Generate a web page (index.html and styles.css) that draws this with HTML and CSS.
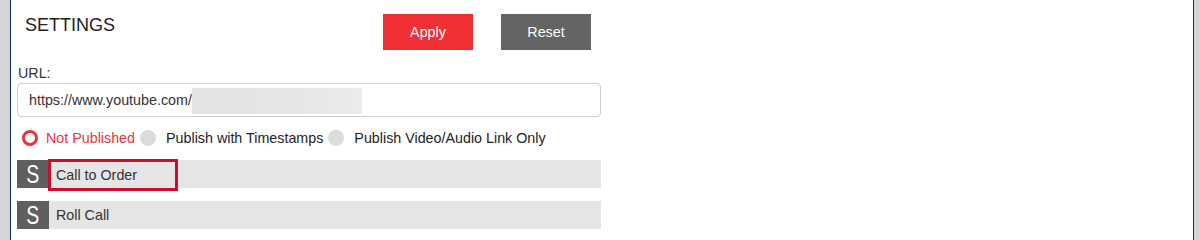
FILE: index.html
```html
<!DOCTYPE html>
<html>
<head>
<meta charset="utf-8">
<link rel="stylesheet" href="styles.css">
</head>
<body>
<div class="frame">
  <div class="header">
    <div class="title">SETTINGS</div>
    <button class="btn btn-apply">Apply</button>
    <button class="btn btn-reset">Reset</button>
  </div>
  <div class="label">URL:</div>
  <div class="input"><span class="url-text">https://www.youtube.com/</span><span class="redact"></span></div>
  <div class="radios">
    <span class="radio radio-on"></span><span class="radio-label label-on">Not Published</span>
    <span class="radio"></span><span class="radio-label">Publish with Timestamps</span>
    <span class="radio"></span><span class="radio-label">Publish Video/Audio Link Only</span>
  </div>
  <div class="row row-first">
    <div class="s-box"><span class="s-glyph">S</span></div>
    <div class="row-title row-title-focus">Call to Order</div>
  </div>
  <div class="row">
    <div class="s-box"><span class="s-glyph">S</span></div>
    <div class="row-title">Roll Call</div>
  </div>
</div>
</body>
</html>
```

FILE: styles.css
```css
html, body {
  margin: 0;
  padding: 0;
  height: 100%;
}
body {
  background: #d5d5d5;
  font-family: "Liberation Sans", Arial, sans-serif;
  color: #222;
  overflow: hidden;
}
.frame {
  margin: 0 6px 0 10px;
  border-left: 1px solid #1f2f66;
  border-right: 1px solid #1f2f66;
  background: #ffffff;
  height: 100%;
  min-height: 235px;
  padding-left: 6px;
  box-sizing: border-box;
}
.header {
  display: flex;
  padding-top: 14px;
}
.title {
  width: 358px;
  margin-left: 8px;
  margin-top: 1px;
  font-size: 18px;
  line-height: 20px;
  color: #222;
}
.btn {
  width: 90px;
  height: 36px;
  border: none;
  margin: 0;
  padding: 0;
  font-family: "Liberation Sans", Arial, sans-serif;
  font-size: 14.3px;
  color: #ffffff;
}
.btn-apply {
  background: #ef3035;
}
.btn-reset {
  background: #646464;
  margin-left: 28px;
}
.label {
  margin-top: 15px;
  margin-left: 1px;
  font-size: 14.3px;
  line-height: 16px;
  color: #333;
}
.input {
  margin-top: 2px;
  width: 584px;
  height: 34px;
  box-sizing: border-box;
  border: 1px solid #cfcfcf;
  border-radius: 4px;
  display: flex;
  align-items: center;
  padding-left: 11px;
  font-size: 14.3px;
  color: #333;
}
.redact {
  display: inline-block;
  width: 170px;
  height: 26px;
  margin-top: 2px;
  background: linear-gradient(to right, #e3e3e5, #e6e6e7 60%, #ececec);
}
.radios {
  display: flex;
  align-items: center;
  margin-top: 13px;
  height: 16px;
  font-size: 14.3px;
  color: #222;
}
.radio {
  width: 16px;
  height: 16px;
  border-radius: 50%;
  background: #dcdcdc;
  box-sizing: border-box;
  margin-right: 10px;
  flex: none;
}
.radio-on {
  margin-left: 5px;
  background: #ffffff;
  border: 3px solid #ee3338;
  margin-right: 8px;
}
.radio-label {
  margin-right: 5px;
}
.label-on {
  color: #ee3338;
}
.row {
  display: flex;
  width: 584px;
  height: 28px;
  background: #e5e5e5;
  margin-top: 13px;
  font-size: 14.3px;
  color: #333;
}
.row-first {
  margin-top: 14px;
}
.s-box {
  width: 32px;
  height: 28px;
  background: #5f5f5f;
  display: flex;
  align-items: center;
  justify-content: center;
  flex: none;
}
.s-glyph {
  display: inline-block;
  color: #ffffff;
  font-size: 26px;
  line-height: 28px;
  transform: scaleX(0.75);
}
.row-title {
  display: flex;
  align-items: center;
  padding-left: 7px;
}
.row-title-focus {
  margin-left: 2px;
  margin-top: 2px;
  height: 26px;
  width: 124px;
  box-sizing: border-box;
  padding-left: 5px;
  outline: 3px solid #c8102e;
}
```
